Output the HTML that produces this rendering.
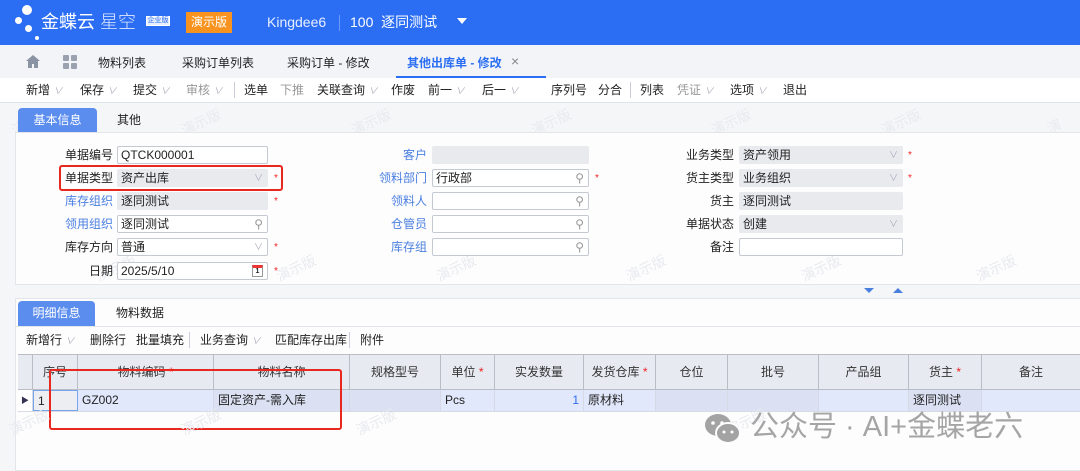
<!DOCTYPE html><html><head><meta charset="utf-8"><style>
*{box-sizing:border-box;margin:0;padding:0}
body{width:1080px;height:471px;overflow:hidden;background:#f5f6f8;font-family:"Liberation Sans","Noto Sans CJK SC",sans-serif;font-size:12px;color:#222;position:relative}
.a{position:absolute;white-space:nowrap}
.hdr{left:0;top:0;width:1080px;height:45px;background:#2b6ef3}
.dot{position:absolute;background:#fff;border-radius:50%}
.tabs{left:0;top:45px;width:1080px;height:33px;background:#f2f4f8}
.tb{left:0;top:78px;width:1080px;height:25px;background:#fff;border-bottom:1px solid #dfe3ea}
.tb span,.tb2 span{position:absolute;top:0;line-height:24px;font-size:12px}
.v{color:#aab;font-size:9px}
.lbl{position:absolute;text-align:right;width:80px;font-size:12px;line-height:18px}
.blue{color:#4a7fe0}
.inp{position:absolute;height:18px;border:1px solid #c4c9d2;background:#fff;border-radius:2px;font-size:12px;line-height:16px;padding-left:3px}
.ro{background:#e8eaee;border-color:#e8eaee}
.star{position:absolute;color:#e22;font-size:10px}
.th{position:absolute;top:355px;height:34px;line-height:34px;text-align:center;border-right:1px solid #b9bdc6;background:#e7eaf1;color:#333}
.td{position:absolute;top:390px;height:21px;line-height:21px;padding-left:4px;border-right:1px solid #d5dae5;background:#e2e8fb}
.wm{position:absolute;color:#e8eaee;font-size:14px;transform:rotate(-25deg)}
</style></head><body>
<div class="a hdr">
<div class="dot" style="left:22px;top:5px;width:10px;height:10px"></div>
<div class="dot" style="left:15px;top:17px;width:7px;height:7px"></div>
<div class="dot" style="left:25px;top:25px;width:7px;height:7px"></div>
<div class="dot" style="left:35px;top:36px;width:4px;height:4px"></div>
<div class="a" style="left:41px;top:9px;color:#fff;font-size:18px;line-height:26px">金蝶云<span style="font-weight:300;color:#dfe8ff"> 星空</span></div>
<div class="a" style="left:146px;top:16px;width:24px;height:10px;border:1px solid #fff;color:#2b6ef3;background:#e7eeff;font-size:7px;line-height:8px;text-align:center">企业版</div>
<div class="a" style="left:186px;top:12px;width:46px;height:21px;background:#f7931e;color:#fff;font-size:12px;line-height:21px;text-align:center">演示版</div>
<div class="a" style="left:267px;top:12px;color:#e8efff;font-size:14px;line-height:21px">Kingdee6</div>
<div class="a" style="left:339px;top:15px;width:1px;height:16px;background:#6a9af5"></div>
<div class="a" style="left:350px;top:12px;color:#fff;font-size:14px;line-height:21px">100&nbsp; 逐同测试</div>
<div class="a" style="left:457px;top:18px;border-left:5px solid transparent;border-right:5px solid transparent;border-top:6px solid #fff"></div>
</div>
<div class="a tabs">
<svg class="a" style="left:26px;top:10px" width="14" height="13"><path d="M7 0L0 6h2v7h4V9h2v4h4V6h2z" fill="#8a93a3"/></svg>
<div class="a" style="left:63px;top:10px;width:6px;height:6px;background:#9aa2b0;border-radius:1px"></div>
<div class="a" style="left:71px;top:10px;width:6px;height:6px;background:#9aa2b0;border-radius:1px"></div>
<div class="a" style="left:63px;top:18px;width:6px;height:6px;background:#9aa2b0;border-radius:1px"></div>
<div class="a" style="left:71px;top:18px;width:6px;height:6px;background:#9aa2b0;border-radius:1px"></div>
<div class="a" style="left:98px;top:9px;font-size:12px;line-height:18px">物料列表</div>
<div class="a" style="left:182px;top:9px;font-size:12px;line-height:18px">采购订单列表</div>
<div class="a" style="left:287px;top:9px;font-size:12px;line-height:18px">采购订单 - 修改</div>
<div class="a" style="left:407px;top:9px;font-size:12px;line-height:18px;color:#2b6ef3;font-weight:bold">其他出库单 - 修改</div>
<div class="a" style="left:511px;top:8px;font-size:14px;color:#888">×</div>
<div class="a" style="left:396px;top:31px;width:150px;height:2px;background:#2b6ef3"></div>
</div>
<div class="a tb">
<span style="left:26px">新增 <i class="v">∨</i></span><span style="left:80px">保存 <i class="v">∨</i></span><span style="left:133px">提交 <i class="v">∨</i></span><span style="left:186px;color:#999">审核 <i class="v">∨</i></span>
<span style="left:234px;top:4px;width:1px;height:16px;background:#ccd;"></span>
<span style="left:244px">选单</span><span style="left:280px;color:#999">下推</span><span style="left:317px">关联查询 <i class="v">∨</i></span><span style="left:391px">作废</span><span style="left:428px">前一 <i class="v">∨</i></span><span style="left:482px">后一 <i class="v">∨</i></span><span style="left:551px">序列号</span><span style="left:598px">分合</span>
<span style="left:630px;top:4px;width:1px;height:16px;background:#ccd;"></span>
<span style="left:640px">列表</span><span style="left:677px;color:#999">凭证 <i class="v">∨</i></span><span style="left:730px">选项 <i class="v">∨</i></span><span style="left:783px">退出</span>
</div>
<div class="wm" style="left:10px;top:112px">演示版</div><div class="wm" style="left:180px;top:112px">演示版</div><div class="wm" style="left:350px;top:112px">演示版</div><div class="wm" style="left:530px;top:112px">演示版</div><div class="wm" style="left:710px;top:112px">演示版</div><div class="wm" style="left:880px;top:112px">演示版</div><div class="wm" style="left:1055px;top:112px">演示版</div>
<div class="a" style="left:18px;top:108px;width:79px;height:24px;background:#5b8def;color:#fff;border-radius:4px 4px 0 0;text-align:center;line-height:24px">基本信息</div>
<div class="a" style="left:117px;top:108px;line-height:24px">其他</div>
<div class="a" style="left:15px;top:132px;width:1065px;height:153px;background:#fdfdfe;border:1px solid #e2e5ea;border-right:none">
</div>
<div class="wm" style="left:95px;top:258px">演示版</div><div class="wm" style="left:275px;top:258px">演示版</div><div class="wm" style="left:435px;top:258px">演示版</div><div class="wm" style="left:625px;top:258px">演示版</div><div class="wm" style="left:800px;top:258px">演示版</div><div class="wm" style="left:975px;top:258px">演示版</div>
<div class="lbl" style="left:33px;top:146px">单据编号</div><div class="inp" style="left:117px;top:146px;width:151px">QTCK000001</div>
<div class="lbl" style="left:33px;top:169px">单据类型</div><div class="inp ro" style="left:117px;top:169px;width:151px">资产出库<span style="position:absolute;right:4px;color:#aab;font-size:9px">∨</span></div><span class="star" style="left:274px;top:173px">*</span>
<div class="lbl blue" style="left:33px;top:192px">库存组织</div><div class="inp ro" style="left:117px;top:192px;width:151px">逐同测试</div><span class="star" style="left:274px;top:196px">*</span>
<div class="lbl blue" style="left:33px;top:215px">领用组织</div><div class="inp" style="left:117px;top:215px;width:151px">逐同测试<span style="position:absolute;right:4px;color:#999">⚲</span></div>
<div class="lbl" style="left:33px;top:238px">库存方向</div><div class="inp" style="left:117px;top:238px;width:151px">普通<span style="position:absolute;right:4px;color:#aab;font-size:9px">∨</span></div><span class="star" style="left:274px;top:242px">*</span>
<div class="lbl" style="left:33px;top:262px">日期</div><div class="inp" style="left:117px;top:262px;width:151px">2025/5/10<span style="position:absolute;right:4px;top:2px;width:11px;height:12px;border:1px solid #999;border-top:3px solid #e33;font-size:7px;line-height:8px;text-align:center;font-weight:bold">1</span></div><span class="star" style="left:274px;top:266px">*</span>
<div class="a" style="left:59px;top:165px;width:224px;height:26px;border:2px solid #e8281f;border-radius:3px"></div>
<div class="lbl blue" style="left:347px;top:146px">客户</div><div class="inp ro" style="left:432px;top:146px;width:157px"></div>
<div class="lbl blue" style="left:347px;top:169px">领料部门</div><div class="inp" style="left:432px;top:169px;width:157px">行政部<span style="position:absolute;right:4px;color:#999">⚲</span></div><span class="star" style="left:595px;top:173px">*</span>
<div class="lbl blue" style="left:347px;top:192px">领料人</div><div class="inp" style="left:432px;top:192px;width:157px"><span style="position:absolute;right:4px;color:#999">⚲</span></div>
<div class="lbl blue" style="left:347px;top:215px">仓管员</div><div class="inp" style="left:432px;top:215px;width:157px"><span style="position:absolute;right:4px;color:#999">⚲</span></div>
<div class="lbl blue" style="left:347px;top:238px">库存组</div><div class="inp" style="left:432px;top:238px;width:157px"><span style="position:absolute;right:4px;color:#999">⚲</span></div>
<div class="lbl" style="left:654px;top:146px">业务类型</div><div class="inp ro" style="left:739px;top:146px;width:164px">资产领用<span style="position:absolute;right:4px;color:#aab;font-size:9px">∨</span></div><span class="star" style="left:908px;top:150px">*</span>
<div class="lbl" style="left:654px;top:169px">货主类型</div><div class="inp ro" style="left:739px;top:169px;width:164px">业务组织<span style="position:absolute;right:4px;color:#aab;font-size:9px">∨</span></div><span class="star" style="left:908px;top:173px">*</span>
<div class="lbl" style="left:654px;top:192px">货主</div><div class="inp ro" style="left:739px;top:192px;width:164px">逐同测试</div>
<div class="lbl" style="left:654px;top:215px">单据状态</div><div class="inp ro" style="left:739px;top:215px;width:164px">创建<span style="position:absolute;right:4px;color:#aab;font-size:9px">∨</span></div>
<div class="lbl" style="left:654px;top:238px">备注</div><div class="inp" style="left:739px;top:238px;width:164px"></div>
<div class="a" style="left:864px;top:288px;border-left:5px solid transparent;border-right:5px solid transparent;border-top:5px solid #4a7fe0"></div>
<div class="a" style="left:893px;top:288px;border-left:5px solid transparent;border-right:5px solid transparent;border-bottom:5px solid #4a7fe0"></div>
<div class="a" style="left:15px;top:298px;width:1065px;height:173px;background:#fdfdfe;border:1px solid #e2e5ea;border-right:none"></div>
<div class="a" style="left:15px;top:326px;width:1065px;height:1px;background:#e2e5ea"></div>
<div class="a" style="left:18px;top:301px;width:77px;height:25px;background:#5b8def;color:#fff;border-radius:4px 4px 0 0;text-align:center;line-height:25px">明细信息</div>
<div class="a" style="left:116px;top:301px;line-height:25px">物料数据</div>
<div class="a tb2" style="left:0;top:328px;width:1080px;height:24px">
<span style="left:26px">新增行 <i class="v">∨</i></span><span style="left:90px">删除行</span><span style="left:136px">批量填充</span><span style="left:189px;top:4px;width:1px;height:16px;background:#ccd"></span><span style="left:200px">业务查询 <i class="v">∨</i></span><span style="left:275px">匹配库存出库</span><span style="left:349px;top:4px;width:1px;height:16px;background:#ccd"></span><span style="left:360px">附件</span>
</div>
<div class="a" style="left:18px;top:354px;width:1062px;height:1px;background:#b9bdc6"></div>
<div class="th" style="left:18px;width:15px"></div>
<div class="th" style="left:33px;width:45px">序号</div>
<div class="th" style="left:78px;width:136px">物料编码 <span style="color:#e22">*</span></div>
<div class="th" style="left:214px;width:136px">物料名称</div>
<div class="th" style="left:350px;width:91px">规格型号</div>
<div class="th" style="left:441px;width:54px">单位 <span style="color:#e22">*</span></div>
<div class="th" style="left:495px;width:89px">实发数量</div>
<div class="th" style="left:584px;width:72px">发货仓库 <span style="color:#e22">*</span></div>
<div class="th" style="left:656px;width:72px">仓位</div>
<div class="th" style="left:728px;width:91px">批号</div>
<div class="th" style="left:819px;width:90px">产品组</div>
<div class="th" style="left:909px;width:73px">货主 <span style="color:#e22">*</span></div>
<div class="th" style="left:982px;width:98px;border-right:none">备注</div>
<div class="a" style="left:18px;top:389px;width:1062px;height:1px;background:#b9bdc6"></div>
<div class="td" style="left:18px;width:15px;background:#fff;padding:0;font-size:8px;text-align:center;color:#335">▶</div>
<div class="td" style="left:33px;width:45px;background:#eceef2;border:1px solid #7aa3ee">1</div>
<div class="td" style="left:78px;width:136px">GZ002</div>
<div class="td" style="left:214px;width:136px;background:#dbe1f3">固定资产-需入库</div>
<div class="td" style="left:350px;width:91px;background:#dbe1f3"></div>
<div class="td" style="left:441px;width:54px">Pcs</div>
<div class="td" style="left:495px;width:89px;text-align:right;padding-right:4px;color:#2b6ef3">1</div>
<div class="td" style="left:584px;width:72px">原材料</div>
<div class="td" style="left:656px;width:72px;background:#dbe1f3"></div>
<div class="td" style="left:728px;width:91px;background:#dbe1f3"></div>
<div class="td" style="left:819px;width:90px"></div>
<div class="td" style="left:909px;width:73px;background:#dbe1f3">逐同测试</div>
<div class="td" style="left:982px;width:98px;border-right:none"></div>
<div class="a" style="left:18px;top:411px;width:1062px;height:1px;background:#d5dae5"></div>
<div class="a" style="left:49px;top:369px;width:293px;height:61px;border:2px solid #e8281f;border-radius:3px"></div>
<div class="wm" style="left:8px;top:412px">演示版</div><div class="wm" style="left:180px;top:412px">演示版</div><div class="wm" style="left:355px;top:412px">演示版</div><div class="wm" style="left:725px;top:412px">演示版</div>
<svg class="a" style="left:703px;top:412px" width="40" height="34"><ellipse cx="15" cy="13" rx="13" ry="11" fill="#a3a3a3"/><ellipse cx="25" cy="21" rx="12" ry="10" fill="#a3a3a3" stroke="#fdfdfe" stroke-width="2"/><circle cx="10" cy="11" r="1.8" fill="#fff"/><circle cx="19" cy="11" r="1.8" fill="#fff"/><circle cx="21" cy="20" r="1.5" fill="#fff"/><circle cx="29" cy="20" r="1.5" fill="#fff"/></svg>
<div class="a" style="left:750px;top:408px;font-size:29px;line-height:38px;color:#a5a5a5">公众号 · AI+金蝶老六</div>
</body></html>
